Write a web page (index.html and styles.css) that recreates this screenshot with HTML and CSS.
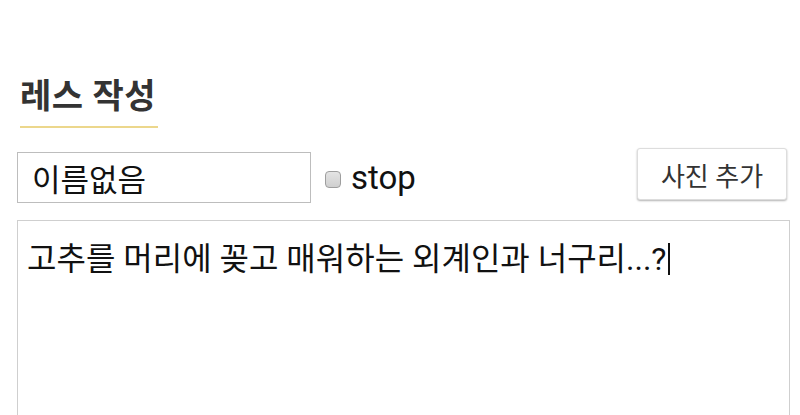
FILE: index.html
```html
<!DOCTYPE html>
<html lang="ko">
<head>
<meta charset="utf-8">
<title>레스 작성</title>
<link rel="stylesheet" href="styles.css">
</head>
<body>
<main class="compose">
  <header class="compose-head">
    <h2 class="compose-title">레스 작성</h2>
  </header>
  <div class="compose-row">
    <input class="name-field" type="text" value="이름없음">
    <label class="stop-toggle"><input class="stop-box" type="checkbox"><span>stop</span></label>
    <button class="photo-btn" type="button">사진 추가</button>
  </div>
  <div class="body-field"><span>고추를 머리에 꽂고 매워하는 외계인과 너구리...?</span><span class="caret"></span></div>
</main>
</body>
</html>
```
FILE: styles.css
```css
html, body {
  margin: 0;
  background: #fff;
}

body {
  font-family: Roboto, "Noto Sans CJK KR", sans-serif;
  color: #111;
  overflow: hidden;
}

.compose {
  padding: 0 10px 0 17px;
}

.compose-head {
  padding: 73px 0 0 3px;
}

.compose-title {
  display: inline-block;
  margin: 0;
  padding: 0 2px 7px 0;
  font-size: 34px;
  font-weight: 700;
  line-height: 46px;
  letter-spacing: 0.5px;
  color: #333;
  border-bottom: 2px solid #ecd78c;
}

.compose-row {
  display: flex;
  align-items: flex-start;
  margin-top: 20px;
  height: 72px;
}

.name-field {
  box-sizing: border-box;
  width: 294px;
  height: 51px;
  margin: 4px 0 0 0;
  padding: 0 14px;
  border: 1px solid #bdbdbd;
  border-radius: 0;
  font-family: Roboto, "Noto Sans CJK KR", sans-serif;
  font-size: 31px;
  color: #111;
  outline: none;
}

.stop-toggle {
  display: flex;
  align-items: center;
  height: 51px;
  margin: 4px 0 0 14px;
  font-size: 33px;
  color: #111;
}

.stop-box {
  appearance: none;
  width: 16px;
  height: 17px;
  margin: 3px 10px 0 0;
  border: 1px solid #9e9e9e;
  border-radius: 4px;
  background: linear-gradient(#e4e4e4, #cfcfcf);
}

.photo-btn {
  box-sizing: border-box;
  width: 150px;
  height: 52px;
  margin: 0 3px 0 auto;
  border: 1px solid #ddd;
  border-radius: 3px;
  background: #fff;
  box-shadow: 0 1px 2px rgba(0, 0, 0, 0.3);
  font-family: Roboto, "Noto Sans CJK KR", sans-serif;
  font-size: 26px;
  color: #333;
}

.body-field {
  box-sizing: border-box;
  height: 195px;
  padding: 17px 9px;
  border: 1px solid #cfcfcf;
  border-bottom: 0;
  font-size: 32px;
  line-height: 42px;
  color: #111;
  white-space: nowrap;
}

.caret {
  display: inline-block;
  width: 2px;
  height: 32px;
  margin-left: 1px;
  background: #111;
  vertical-align: -5px;
}
```
